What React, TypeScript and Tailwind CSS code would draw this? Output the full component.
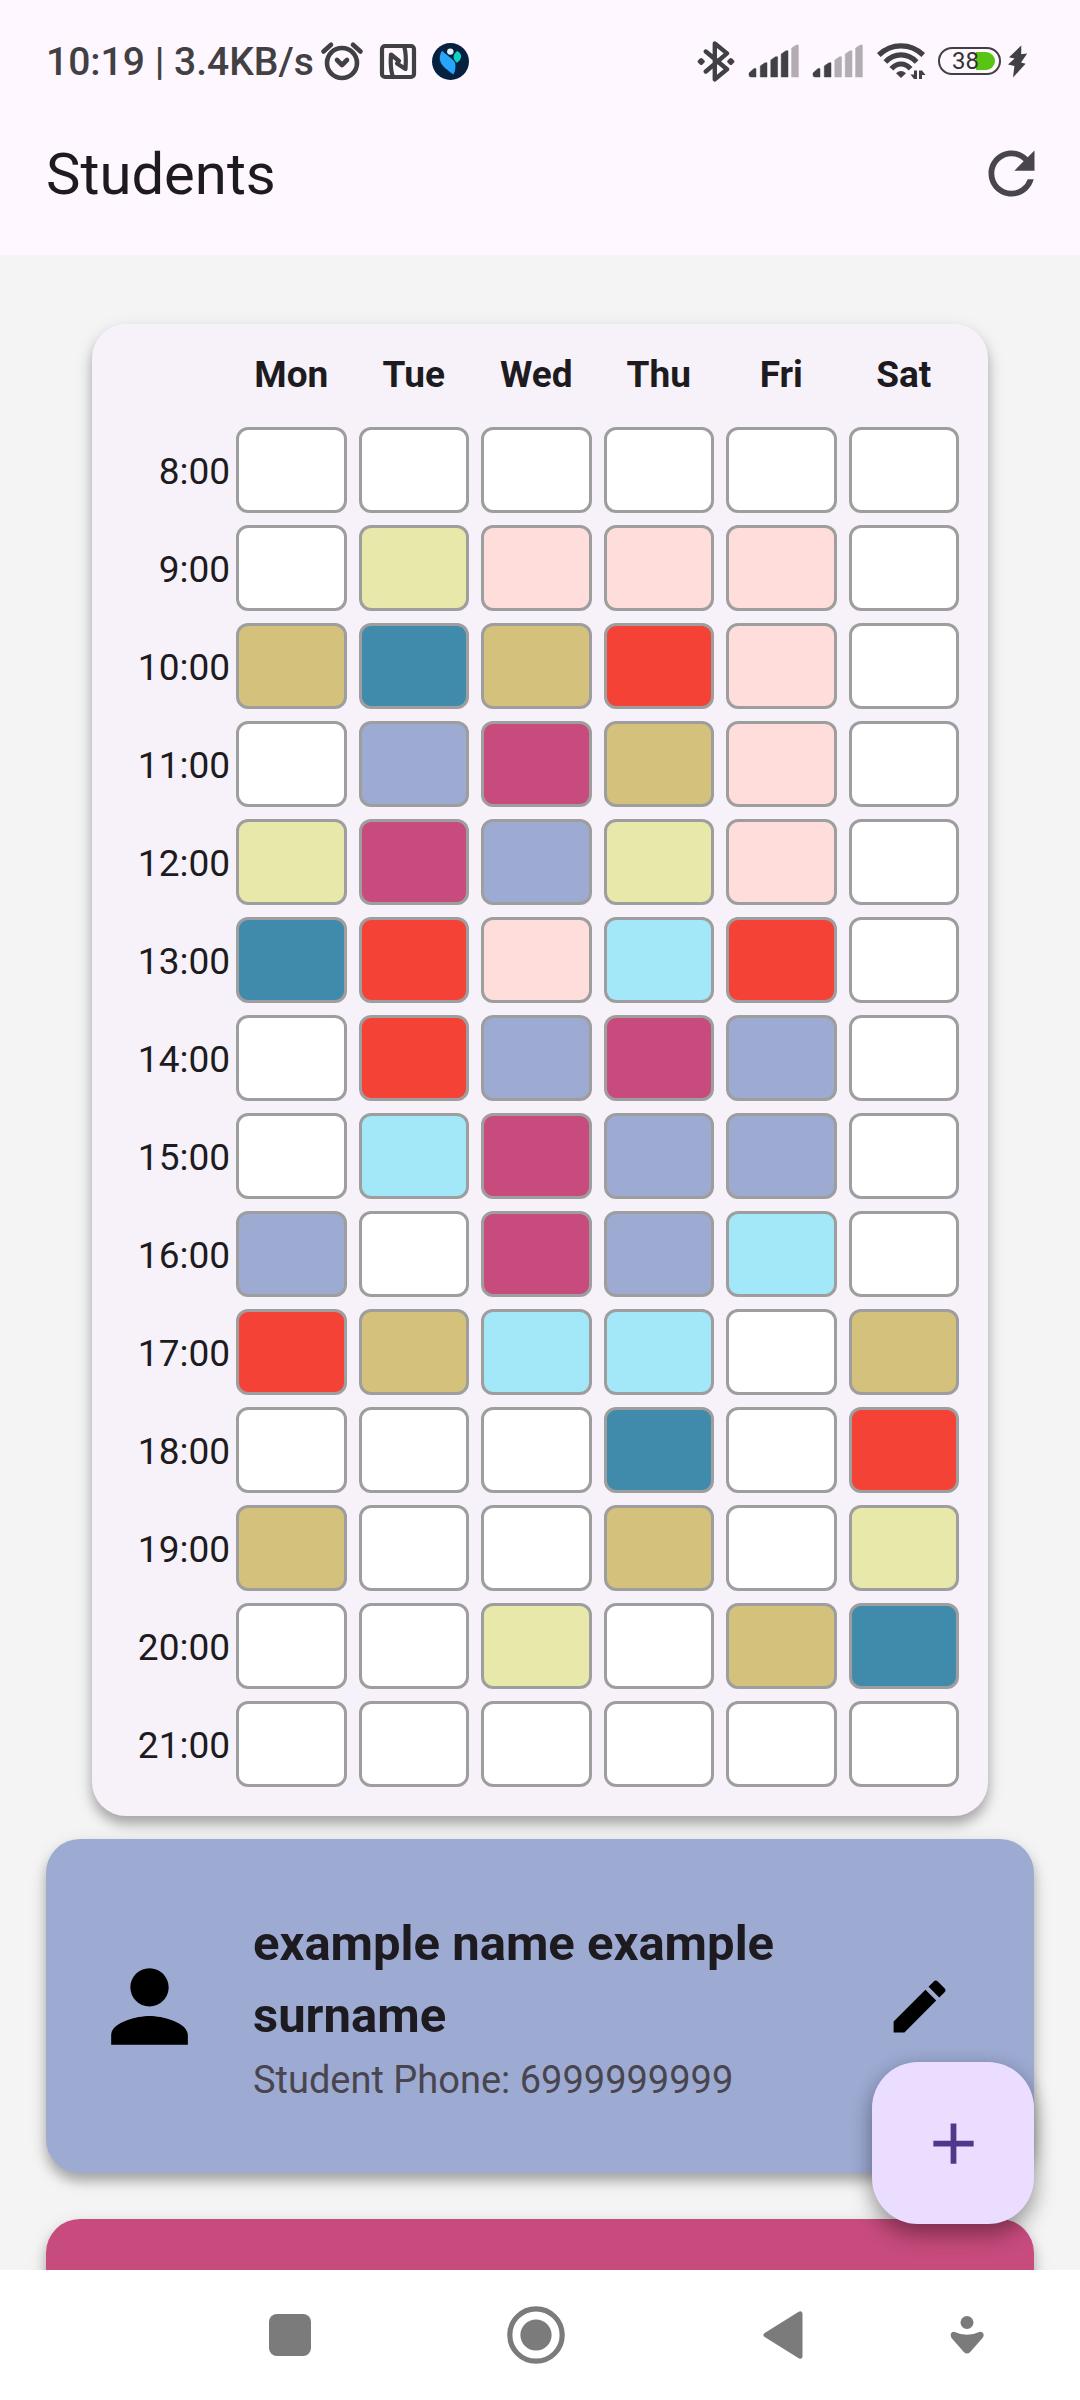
import React from "react";
import { MdAdd, MdEdit, MdPerson, MdRefresh } from "react-icons/md";

const DAYS = ["Mon", "Tue", "Wed", "Thu", "Fri", "Sat"];

const COLORS: Record<string, string> = {
  ".": "bg-white",
  y: "bg-[#e7e8aa]",
  g: "bg-[#d4c17c]",
  t: "bg-[#408bab]",
  p: "bg-[#ffdddb]",
  r: "bg-[#f44336]",
  m: "bg-[#c84b7d]",
  b: "bg-[#9dabd3]",
  c: "bg-[#a2e8f8]",
};

const SCHEDULE: [string, string][] = [
  ["8:00", "......"],
  ["9:00", ".yppp."],
  ["10:00", "gtgrp."],
  ["11:00", ".bmgp."],
  ["12:00", "ymbyp."],
  ["13:00", "trpcr."],
  ["14:00", ".rbmb."],
  ["15:00", ".cmbb."],
  ["16:00", "b.mbc."],
  ["17:00", "rgcc.g"],
  ["18:00", "...t.r"],
  ["19:00", "g..g.y"],
  ["20:00", "..y.gt"],
  ["21:00", "......"],
];

const AlarmIcon = () => (
  <svg width="44" height="40" viewBox="0 0 44 40" fill="none" stroke="currentColor" strokeWidth="4.6" strokeLinecap="round" strokeLinejoin="round">
    <circle cx="22" cy="22" r="15" />
    <path d="M3.5 10.5 L11 3.8 M33 3.8 L40.5 10.5 M17 19 L22 24 L27 19" />
  </svg>
);

const NfcIcon = () => (
  <svg width="38" height="37" viewBox="0 0 38 37" fill="none" stroke="currentColor" strokeWidth="4.2" strokeLinecap="round" strokeLinejoin="round">
    <rect x="3" y="3" width="32" height="31" rx="3" />
    <path d="M13.5 32.5 C11.5 26 11.5 18 12 11.5 L20 18 M25.5 4.5 C27.5 12 27 19 26.5 26 L18 20.5" />
  </svg>
);

const AppLogo = () => (
  <svg width="37" height="37" viewBox="0 0 37 37">
    <circle cx="18.5" cy="18.5" r="18.5" fill="#06213f" />
    <circle cx="18.3" cy="8.6" r="3.2" fill="#e4f1fb" />
    <path d="M25.4 8 C28.5 10 30 12.5 28.8 15 C28 17.4 26.4 19 24.7 19.8 C22.5 17.5 21.4 15.5 21.6 13.2 C22 11 23.5 9 25.4 8Z" fill="#12cfc3" />
    <path d="M10.2 7.8 C14 12 20 15 23 19.4 C24 23 23.5 28 21.3 31.4 C15 27 9 23 7.8 16.6 C7.6 13 8.4 10 10.2 7.8Z" fill="#25a5fb" />
  </svg>
);

const BluetoothIcon = () => (
  <svg width="40" height="42" viewBox="0 0 40 42" fill="none" stroke="currentColor" strokeWidth="4.4" strokeLinecap="round" strokeLinejoin="round">
    <path d="M9.8 11.5 L31 29.3 L18.8 39.4 V3.4 L31 13.4 L9.8 31.5" />
    <path d="M5.2 19.8 L7 21.5 L5.2 23.2 L3.4 21.5Z M34.8 19.8 L36.6 21.5 L34.8 23.2 L33 21.5Z" strokeWidth="3.6" fill="currentColor" />
  </svg>
);

const BARS = [
  "M1 31 V29 L6 24.6 H8 V33 H3 Q1 33 1 31Z",
  "M12.3 33 V22 L17 18.8 H19 V33Z",
  "M22.8 33 V16 L27.5 12.8 H29.6 V33Z",
  "M33.2 33 V10 L38 6.8 H40 V33Z",
  "M43.6 33 V4 L48.4 1 H50.4 V33Z",
];

const SignalIcon = ({ level }: { level: number }) => (
  <svg width="52" height="34" viewBox="0 0 52 34" fill="currentColor" stroke="currentColor" strokeWidth="0.5" strokeLinejoin="round">
    {BARS.map((d, i) => (
      <path key={i} d={d} opacity={i < level ? 1 : 0.4} />
    ))}
  </svg>
);

const WifiIcon = () => (
  <svg width="50" height="38" viewBox="0 0 50 38" fill="none" stroke="currentColor" strokeWidth="5.2">
    <path d="M2.8 13 C15.5 0.8 34.5 0.8 47.2 13 M9.4 20 C18.6 10.6 31.4 10.6 40.6 20" />
    <path d="M15.4 26.8 C21 20.4 29 20.4 34.6 26.8" />
    <path d="M20 31.2 Q25 27 30 31.2 L25 36Z" fill="currentColor" stroke="none" />
    <path d="M41 28.5 V37 H38 L34.5 32.6 H38 V28.5Z M43 28.5 H46 L49.5 33 H46 V37 H43Z" fill="currentColor" stroke="none" />
  </svg>
);

const BoltIcon = () => (
  <svg width="21" height="34" viewBox="0 0 21 34" fill="currentColor">
    <path d="M14.3 1.5 L2 13.3 L7.6 14.4 L1 20.6 L7.4 22 L6 33.4 L18.6 19.8 L14 18.6 L20.2 9.6 L14.2 10.2Z" />
  </svg>
);

const Battery = () => (
  <div className="relative flex h-7 w-[63px] items-center justify-end rounded-full border-2 border-current p-1">
    <div className="h-[18px] w-[19px] rounded-r-full bg-[#58c414]" />
    <span className="absolute inset-x-0 -left-2 text-center text-[24px] leading-[26px] text-[#333]">38</span>
  </div>
);

function StatusBar() {
  return (
    <div className="flex h-[94px] items-center justify-between pt-7 pr-[52px] pl-[46px] text-[#414042]">
      <div className="flex items-center">
        <span className="pt-0.5 text-[39px] leading-[46px] font-medium whitespace-nowrap">10:19 | 3.4KB/s</span>
        <div className="ml-1.5 flex items-center gap-[15px]">
          <AlarmIcon />
          <NfcIcon />
          <AppLogo />
        </div>
      </div>
      <div className="flex items-center gap-3">
        <BluetoothIcon />
        <SignalIcon level={4} />
        <SignalIcon level={2} />
        <WifiIcon />
        <div className="flex items-center gap-1.5">
          <Battery />
          <BoltIcon />
        </div>
      </div>
    </div>
  );
}

function Timetable() {
  return (
    <section className="mx-[46px] rounded-[34px] bg-[#f7f2fa] px-[23px] pb-[23px] shadow-[0_8px_12px_rgba(0,0,0,0.26),0_6px_20px_rgba(0,0,0,0.1)]">
      <table className="w-full table-fixed border-collapse text-[37px] leading-[52px] text-[#1d1b20]">
        <thead>
          <tr className="h-[97px]">
            <td className="w-[115px]" />
            {DAYS.map((d) => (
              <th key={d} scope="col" className="p-0 pt-1 text-center font-bold">
                {d}
              </th>
            ))}
          </tr>
        </thead>
        <tbody>
          {SCHEDULE.map(([time, row]) => (
            <tr key={time}>
              <th scope="row" className="p-0 pt-1 text-right font-normal">
                {time}
              </th>
              {row.split("").map((c, i) => (
                <td key={i} className="p-1.5">
                  <div className={`h-[86px] rounded-xl border-3 border-[#9e9e9e] ${COLORS[c]}`} />
                </td>
              ))}
            </tr>
          ))}
        </tbody>
      </table>
    </section>
  );
}

const CARD =
  "flex min-h-[334px] items-center rounded-[34px] px-[46px] shadow-[0_8px_12px_rgba(0,0,0,0.26),0_6px_20px_rgba(0,0,0,0.1)]";

function StudentCard({ name, phone }: { name: string; phone: string }) {
  return (
    <article className={`${CARD} gap-[46px] bg-[#9dabd3]`}>
      <MdPerson className="size-[115px] shrink-0 text-black" />
      <div className="flex-1 pt-0.5">
        <h2 className="text-[49px] leading-[72px] font-bold text-[#1d1b20]">{name}</h2>
        <p className="mt-0.5 text-[38px] leading-[52px] text-[#49454f]">Student Phone: {phone}</p>
      </div>
      <button type="button" aria-label="Edit student" className="flex size-[138px] shrink-0 items-center justify-center text-black">
        <MdEdit className="size-[69px]" />
      </button>
    </article>
  );
}

function NavBar() {
  return (
    <nav className="flex h-[130px] shrink-0 bg-white pr-[51px] pl-[167px] text-[#7b7b7b]">
      <button type="button" aria-label="Recent apps" className="flex flex-2 items-center justify-center">
        <span className="size-[42px] rounded-lg bg-current" />
      </button>
      <button type="button" aria-label="Home" className="flex flex-2 items-center justify-center">
        <svg width="58" height="58" viewBox="0 0 58 58">
          <circle cx="29" cy="29" r="26.2" fill="none" stroke="currentColor" strokeWidth="5.2" />
          <circle cx="29" cy="29" r="15.6" fill="currentColor" />
        </svg>
      </button>
      <button type="button" aria-label="Back" className="flex flex-2 items-center justify-center">
        <svg width="40" height="48" viewBox="0 0 40 48" fill="currentColor" stroke="currentColor" strokeWidth="5" strokeLinejoin="round">
          <path d="M3 24 L37 2.8 V45.2Z" />
        </svg>
      </button>
      <button type="button" aria-label="Hide navigation" className="flex flex-1 items-center justify-center">
        <svg width="34" height="38" viewBox="0 0 34 38" fill="currentColor">
          <circle cx="17" cy="6.5" r="6.5" />
          <path d="M4 15.8 Q17 21.8 30 15.8 Q34 16 33.6 20 L32.5 22 L20 36.2 Q17 39 14 36.2 L1.5 22 Q-1 16.5 4 15.8Z" />
        </svg>
      </button>
    </nav>
  );
}

export default function App() {
  return (
    <div className="flex h-screen flex-col bg-[#f4f4f4] font-[Roboto,sans-serif]">
      <header className="shrink-0 bg-[#fef7ff]">
        <StatusBar />
        <div className="flex h-[161px] items-center justify-between pr-[34px] pb-0.5 pl-[46px]">
          <h1 className="text-[58px] leading-[72px] text-[#1d1b20]">Students</h1>
          <button type="button" aria-label="Refresh" className="text-[#49454f]">
            <MdRefresh className="size-[69px]" />
          </button>
        </div>
      </header>
      <main className="relative min-h-0 flex-1 overflow-hidden">
        <div className="px-[46px] pt-[69px]">
          <Timetable />
          <div className="mt-[23px] flex flex-col gap-[46px]">
            <StudentCard name="example name example surname" phone="6999999999" />
            <div className={`${CARD} bg-[#c84b7d]`} />
          </div>
        </div>
        <button
          type="button"
          aria-label="Add student"
          className="absolute right-[46px] bottom-[46px] flex size-[162px] items-center justify-center rounded-[46px] bg-[#eaddff] text-[#4f378b] shadow-[0_12px_22px_rgba(0,0,0,0.3),0_2px_20px_rgba(0,0,0,0.14)]"
        >
          <MdAdd className="size-[69px]" />
        </button>
      </main>
      <NavBar />
    </div>
  );
}
